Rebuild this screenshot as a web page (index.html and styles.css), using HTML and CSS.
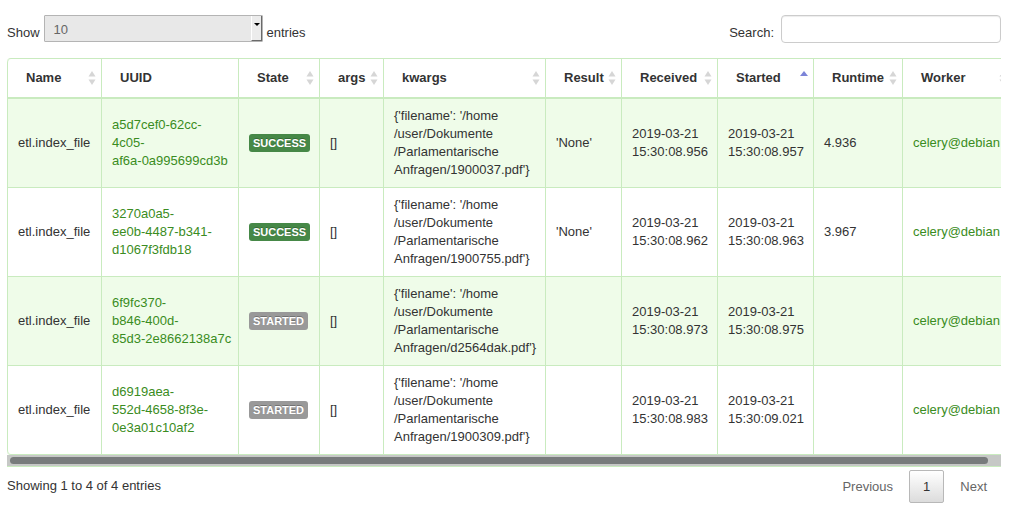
FILE: index.html
```html
<!DOCTYPE html>
<html>
<head>
<meta charset="utf-8">
<title>Tasks</title>
<link rel="stylesheet" href="styles.css">
</head>
<body>
<div class="page">
  <div class="toolbar">
    <div class="length">
      <span class="lbl">Show</span>
      <span class="select-wrap"><span class="select-val">10</span><span class="select-btn"></span></span>
      <span class="lbl">entries</span>
    </div>
    <label class="search"><span class="lbl">Search:</span><input type="search" class="search-input"></label>
  </div>

  <div class="scroll-wrap">
    <div class="scroller">
      <table class="tasks">
        <thead>
          <tr>
            <th class="c-name"><div class="th-in"><span>Name</span><svg class="sort" width="8" height="16" viewBox="0 0 8 16"><polygon points="4,1 7.5,6.5 0.5,6.5" class="tri"/><polygon points="0.5,9.5 7.5,9.5 4,15" class="tri"/></svg></div></th>
            <th class="c-uuid"><div class="th-in"><span>UUID</span></div></th>
            <th class="c-state"><div class="th-in"><span>State</span><svg class="sort" width="8" height="16" viewBox="0 0 8 16"><polygon points="4,1 7.5,6.5 0.5,6.5" class="tri"/><polygon points="0.5,9.5 7.5,9.5 4,15" class="tri"/></svg></div></th>
            <th class="c-args"><div class="th-in"><span>args</span><svg class="sort" width="8" height="16" viewBox="0 0 8 16"><polygon points="4,1 7.5,6.5 0.5,6.5" class="tri"/><polygon points="0.5,9.5 7.5,9.5 4,15" class="tri"/></svg></div></th>
            <th class="c-kwargs"><div class="th-in"><span>kwargs</span><svg class="sort" width="8" height="16" viewBox="0 0 8 16"><polygon points="4,1 7.5,6.5 0.5,6.5" class="tri"/><polygon points="0.5,9.5 7.5,9.5 4,15" class="tri"/></svg></div></th>
            <th class="c-result"><div class="th-in"><span>Result</span><svg class="sort" width="8" height="16" viewBox="0 0 8 16"><polygon points="4,1 7.5,6.5 0.5,6.5" class="tri"/><polygon points="0.5,9.5 7.5,9.5 4,15" class="tri"/></svg></div></th>
            <th class="c-received"><div class="th-in"><span>Received</span><svg class="sort" width="8" height="16" viewBox="0 0 8 16"><polygon points="4,1 7.5,6.5 0.5,6.5" class="tri"/><polygon points="0.5,9.5 7.5,9.5 4,15" class="tri"/></svg></div></th>
            <th class="c-started"><div class="th-in"><span>Started</span><svg class="sort" width="8" height="16" viewBox="0 0 8 16"><polygon points="4,1 8,6 0,6" class="tri-asc"/></svg></div></th>
            <th class="c-runtime"><div class="th-in"><span>Runtime</span><svg class="sort" width="8" height="16" viewBox="0 0 8 16"><polygon points="4,1 7.5,6.5 0.5,6.5" class="tri"/><polygon points="0.5,9.5 7.5,9.5 4,15" class="tri"/></svg></div></th>
            <th class="c-worker"><div class="th-in"><span>Worker</span><svg class="sort" width="8" height="16" viewBox="0 0 8 16"><polygon points="4,1 7.5,6.5 0.5,6.5" class="tri"/><polygon points="0.5,9.5 7.5,9.5 4,15" class="tri"/></svg></div></th>
          </tr>
        </thead>
        <tbody>
          <tr class="odd">
            <td>etl.index_file</td>
            <td><a class="link">a5d7cef0-62cc-<br>4c05-<br>af6a-0a995699cd3b</a></td>
            <td><span class="label label-success">SUCCESS</span></td>
            <td>[]</td>
            <td>{'filename': '/home<br>/user/Dokumente<br>/Parlamentarische<br>Anfragen/1900037.pdf'}</td>
            <td>'None'</td>
            <td>2019-03-21<br>15:30:08.956</td>
            <td>2019-03-21<br>15:30:08.957</td>
            <td>4.936</td>
            <td><a class="link">celery@debian</a></td>
          </tr>
          <tr class="even">
            <td>etl.index_file</td>
            <td><a class="link">3270a0a5-<br>ee0b-4487-b341-<br>d1067f3fdb18</a></td>
            <td><span class="label label-success">SUCCESS</span></td>
            <td>[]</td>
            <td>{'filename': '/home<br>/user/Dokumente<br>/Parlamentarische<br>Anfragen/1900755.pdf'}</td>
            <td>'None'</td>
            <td>2019-03-21<br>15:30:08.962</td>
            <td>2019-03-21<br>15:30:08.963</td>
            <td>3.967</td>
            <td><a class="link">celery@debian</a></td>
          </tr>
          <tr class="odd">
            <td>etl.index_file</td>
            <td><a class="link">6f9fc370-<br>b846-400d-<br>85d3-2e8662138a7c</a></td>
            <td><span class="label label-started">STARTED</span></td>
            <td>[]</td>
            <td>{'filename': '/home<br>/user/Dokumente<br>/Parlamentarische<br>Anfragen/d2564dak.pdf'}</td>
            <td></td>
            <td>2019-03-21<br>15:30:08.973</td>
            <td>2019-03-21<br>15:30:08.975</td>
            <td></td>
            <td><a class="link">celery@debian</a></td>
          </tr>
          <tr class="even">
            <td>etl.index_file</td>
            <td><a class="link">d6919aea-<br>552d-4658-8f3e-<br>0e3a01c10af2</a></td>
            <td><span class="label label-started">STARTED</span></td>
            <td>[]</td>
            <td>{'filename': '/home<br>/user/Dokumente<br>/Parlamentarische<br>Anfragen/1900309.pdf'}</td>
            <td></td>
            <td>2019-03-21<br>15:30:08.983</td>
            <td>2019-03-21<br>15:30:09.021</td>
            <td></td>
            <td><a class="link">celery@debian</a></td>
          </tr>
        </tbody>
      </table>
    </div>
    <div class="hscroll"><div class="hscroll-thumb"></div></div>
  </div>

  <div class="footer">
    <div class="info">Showing 1 to 4 of 4 entries</div>
    <div class="paging">
      <a class="pbtn disabled">Previous</a>
      <a class="pbtn current">1</a>
      <a class="pbtn disabled">Next</a>
    </div>
  </div>
</div>
</body>
</html>
```

FILE: styles.css
```css
html, body {
  margin: 0;
  padding: 0;
  background: #ffffff;
}

body {
  font-family: "Liberation Sans", Arial, Helvetica, sans-serif;
  font-size: 13px;
  line-height: 18px;
  color: #333333;
}

.page {
  padding: 15px 13px 0 7px;
}

/* ---------- toolbar ---------- */
.toolbar {
  display: flex;
  justify-content: space-between;
  align-items: flex-start;
  height: 28px;
}

.length {
  display: flex;
  align-items: flex-start;
  gap: 4px;
}

.lbl {
  display: block;
  margin-top: 9px;
  white-space: nowrap;
}

.select-wrap {
  position: relative;
  display: flex;
  align-items: flex-start;
  box-sizing: border-box;
  width: 219px;
  height: 27px;
  background: #e8e8e8;
  border: 1px solid #b4b4b4;
  border-radius: 1px;
}

.select-val {
  padding: 5px 0 0 9px;
  flex: 1;
  color: #666666;
}

.select-btn {
  position: relative;
  box-sizing: border-box;
  width: 11px;
  height: 25px;
  background: #ececec;
  border-left: 1px solid #ffffff;
  border-right: 1px solid #6a6a6a;
  border-bottom: 1px solid #6a6a6a;
}

.select-btn::after {
  content: "";
  position: absolute;
  left: 2px;
  top: 7px;
  border-left: 3px solid transparent;
  border-right: 3px solid transparent;
  border-top: 3px solid #000000;
}

.search {
  display: flex;
  align-items: flex-start;
}

.search-input {
  box-sizing: border-box;
  width: 220px;
  height: 28px;
  margin: 0 0 0 7px;
  padding: 4px 6px;
  border: 1px solid #cccccc;
  border-radius: 4px;
  background: #ffffff;
  box-shadow: inset 0 1px 1px rgba(0, 0, 0, 0.075);
  font: inherit;
  outline: none;
}

/* ---------- table ---------- */
.scroll-wrap {
  margin-top: 15px;
  border-bottom: 1px solid #c9ebbf;
}

.scroller {
  overflow: hidden;
}

.hscroll {
  display: flex;
  height: 11px;
  box-sizing: border-box;
  padding: 2px 13px 2px 3px;
  background: #c6c8c6;
}

.hscroll-thumb {
  flex: 1;
  background: #787b7c;
  border-radius: 4px;
}

.tasks {
  table-layout: fixed;
  width: 1006px;
  border-collapse: separate;
  border-spacing: 0;
  border: 1px solid #c9ebbf;
  border-left: 0;
  border-radius: 4px;
}

.tasks th,
.tasks td {
  box-sizing: border-box;
  border-left: 1px solid #c9ebbf;
  text-align: left;
}

.tasks th {
  padding: 10px 5px 10px 18px;
  border-bottom: 1px solid #c9ebbf;
  font-weight: bold;
  color: #333333;
  white-space: nowrap;
  background: #ffffff;
}

.tasks th:first-child {
  border-top-left-radius: 4px;
}

.tasks tbody tr:last-child td:first-child {
  border-bottom-left-radius: 4px;
}

.th-in {
  display: flex;
  justify-content: space-between;
  align-items: center;
}

.sort {
  display: block;
  flex: none;
}

.tri {
  fill: #d6d6d6;
}

.tri-asc {
  fill: #7c84d8;
}

.tasks td {
  padding: 8px 10px;
  border-top: 1px solid #c9ebbf;
  vertical-align: middle;
  white-space: nowrap;
}

.tasks tr.odd td {
  background: #effce9;
}

.tasks tr.even td {
  background: #ffffff;
}

.c-name { width: 94px; }
.c-uuid { width: 137px; }
.c-state { width: 81px; }
.c-args { width: 64px; }
.c-kwargs { width: 162px; }
.c-result { width: 76px; }
.c-received { width: 96px; }
.c-started { width: 96px; }
.c-runtime { width: 89px; }
.c-worker { width: 110px; }

.link {
  color: #3a8c22;
  text-decoration: none;
}

.label {
  display: inline-block;
  padding: 2px 4px;
  font-size: 10.998px;
  font-weight: bold;
  line-height: 14px;
  color: #ffffff;
  text-shadow: 0 -1px 0 rgba(0, 0, 0, 0.25);
  white-space: nowrap;
  vertical-align: baseline;
  border-radius: 3px;
}

.label-success {
  background-color: #468847;
}

.label-started {
  background-color: #999999;
}

/* ---------- footer ---------- */
.footer {
  display: flex;
  justify-content: space-between;
  align-items: flex-start;
}

.info {
  padding-top: 10px;
}

.paging {
  display: flex;
  padding-top: 3px;
}

.pbtn {
  display: block;
  padding: 6.5px 13px;
  margin-left: 2px;
  border: 1px solid transparent;
  border-radius: 2px;
  color: #666666;
  cursor: default;
}

.pbtn.current {
  color: #333333;
  border-color: #b8b8b8;
  background: linear-gradient(to bottom, #ffffff 0%, #dcdcdc 100%);
}
```
